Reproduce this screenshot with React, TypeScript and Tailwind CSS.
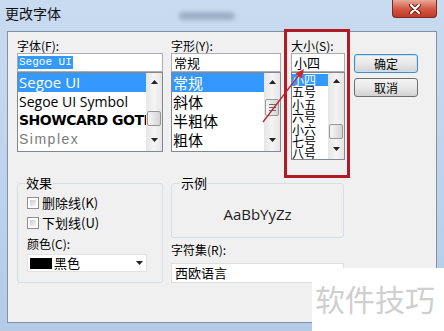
const ui = "font-['Noto_Sans_CJK_SC','Liberation_Sans',sans-serif]";

function Tri({ up = false }: { up?: boolean }) {
  return (
    <svg width="7" height="4" viewBox="0 0 7 4">
      {up ? <path d="M0 4 L3.5 0 L7 4 Z" fill="#222" /> : <path d="M0 0 L7 0 L3.5 4 Z" fill="#222" />}
    </svg>
  );
}

function ScrollBar({ thumb, grip = false }: { thumb: string; grip?: boolean }) {
  return (
    <div className="flex w-[16px] shrink-0 flex-col bg-gradient-to-r from-[#e6e6e6] via-[#f4f4f4] to-[#e6e6e6]">
      <div className="flex h-[18px] items-center justify-center">
        <Tri up />
      </div>
      <div className="flex-1 px-[1px]">
        <div
          className={`${thumb} flex flex-col items-center justify-center gap-[2px] rounded-[2px] border border-[#979797] bg-gradient-to-r from-[#f6f6f6] to-[#d4d4d4]`}
        >
          {grip && (
            <>
              <span className="h-[1px] w-[7px] bg-[#6b6b6b]" />
              <span className="h-[1px] w-[7px] bg-[#6b6b6b]" />
              <span className="h-[1px] w-[7px] bg-[#6b6b6b]" />
            </>
          )}
        </div>
      </div>
      <div className="flex h-[22px] items-center justify-center">
        <Tri />
      </div>
    </div>
  );
}

function Check({ label }: { label: string }) {
  return (
    <div className="mt-[6px] flex h-[14px] items-center gap-[3px]">
      <span className="h-[12px] w-[12px] border border-[#8f8f8f] bg-white p-[2px]">
        <span className="block h-full w-full bg-gradient-to-br from-[#c9cdd3] to-[#f4f4f4]" />
      </span>
      <span className="text-[13px] leading-[14px]">{label}</span>
    </div>
  );
}

export default function App() {
  return (
    <div
      className={`relative h-[331px] w-[444px] overflow-hidden bg-gradient-to-b from-[#c8dbf0] via-[#bfd4ec] to-[#b4cbe6] ${ui} text-[12px] text-black`}
    >
      {/* title bar */}
      <div className="flex h-[31px] items-start">
        <div className="pl-[5px] pt-[5px] text-[14px] leading-[16px] text-[#111]">更改字体</div>
        <div className="ml-[118px] mt-[12px] h-[8px] w-[56px] rounded-full bg-[#8192aa] opacity-60 blur-[2px]" />
        <div className="ml-auto mr-[7px] flex h-[18px] w-[45px] items-center justify-center rounded-b-[4px] border border-t-0 border-[#7a2a20] bg-gradient-to-b from-[#e8a898] via-[#d45a45] to-[#c03826]">
          <svg width="12" height="10" viewBox="0 0 12 10">
            <path d="M2 1 L10 9 M10 1 L2 9" stroke="#5a1810" strokeWidth="4" strokeLinecap="round" />
            <path d="M2 1 L10 9 M10 1 L2 9" stroke="#fff" strokeWidth="2.2" strokeLinecap="round" />
          </svg>
        </div>
      </div>

      {/* client area */}
      <div className="mx-[7px] h-[292px] border border-[#7f92aa] bg-[#f0f0f0] pl-[9px] pt-[6px]">
        <div className="flex items-start">
          {/* font family */}
          <div className="w-[146px]">
            <div className="h-[15px] leading-[15px]">字体(F):</div>
            <div className="flex h-[19px] items-center border border-[#abadb3] bg-white">
              <span className="bg-[#3399ff] px-[1px] font-['Liberation_Mono',monospace] text-[11px] leading-[13px] text-white">
                Segoe UI
              </span>
            </div>
            <div className="flex h-[80px] border border-[#828790] bg-white">
              <div className="flex-1 overflow-hidden whitespace-nowrap">
                <div className="h-[19px] bg-[#3399ff] pl-[1px] font-['Open_Sans',sans-serif] text-[15px] leading-[19px] text-white">
                  Segoe UI
                </div>
                <div className="h-[19px] pl-[1px] font-['Open_Sans',sans-serif] text-[14px] leading-[19px]">
                  Segoe UI Symbol
                </div>
                <div className="h-[19px] pl-[1px] font-['DejaVu_Sans',sans-serif] text-[14px] font-black leading-[19px] tracking-[-0.5px]">
                  SHOWCARD GOTHIC
                </div>
                <div className="h-[19px] pl-[1px] font-['Liberation_Sans',sans-serif] text-[14px] font-light leading-[19px] tracking-[1.5px] text-[#7a7a7a]">
                  Simplex
                </div>
              </div>
              <ScrollBar thumb="mt-[20px] h-[15px]" />
            </div>
          </div>

          {/* style */}
          <div className="ml-[8px] w-[110px]">
            <div className="h-[15px] leading-[15px]">字形(Y):</div>
            <div className="flex h-[19px] items-center border border-[#abadb3] bg-white pl-[2px] text-[13px]">常规</div>
            <div className="flex h-[80px] border border-[#828790] bg-white">
              <div className="flex-1 overflow-hidden text-[15px] leading-[19px]">
                <div className="h-[19px] bg-[#3399ff] pl-[1px] text-white">常规</div>
                <div className="h-[19px] pl-[1px]">斜体</div>
                <div className="h-[19px] pl-[1px]">半粗体</div>
                <div className="h-[19px] pl-[1px]">粗体</div>
              </div>
              <ScrollBar thumb="mt-[8px] h-[17px]" grip />
            </div>
          </div>

          {/* size */}
          <div className="ml-[10px] w-[54px]">
            <div className="h-[15px] leading-[15px]">大小(S):</div>
            <div className="flex h-[19px] items-center border border-[#abadb3] bg-white pl-[2px] text-[13px]">小四</div>
            <div className="flex h-[88px] border border-[#828790] bg-white">
              <div className="flex-1 overflow-hidden pt-[1px] text-[12px] leading-[12.4px]">
                <div className="h-[12.4px] bg-[#3399ff] text-white">小四</div>
                <div className="h-[12.4px]">五号</div>
                <div className="h-[12.4px]">小五</div>
                <div className="h-[12.4px]">六号</div>
                <div className="h-[12.4px]">小六</div>
                <div className="h-[12.4px]">七号</div>
                <div className="h-[12.4px]">八号</div>
              </div>
              <ScrollBar thumb="mt-[35px] h-[15px]" />
            </div>
          </div>

          {/* buttons */}
          <div className="ml-[9px] flex w-[64px] flex-col gap-[5px] pt-[16px]">
            <div className="flex h-[19px] items-center justify-center rounded-[3px] border border-[#4a8cc0] bg-gradient-to-b from-[#f4f4f4] via-[#e8e8e8] to-[#d2d2d2] shadow-[inset_0_0_0_1px_#bfe2f8] text-[12px]">
              确定
            </div>
            <div className="flex h-[19px] items-center justify-center rounded-[3px] border border-[#707070] bg-gradient-to-b from-[#f4f4f4] via-[#e8e8e8] to-[#d2d2d2] text-[12px]">
              取消
            </div>
          </div>
        </div>

        <div className="mt-[23px] flex items-start gap-[8px]">
          {/* effects */}
          <div className="h-[100px] w-[146px] rounded-[3px] border border-[#d5dfe5] pl-[9px]">
            <div className="-mt-[8px] ml-[-2px] w-fit bg-[#f0f0f0] px-[1px] text-[13px] leading-[14px]">效果</div>
            <Check label="删除线(K)" />
            <Check label="下划线(U)" />
            <div className="mt-[7px] h-[14px] text-[12px] leading-[14px]">颜色(C):</div>
            <div className="mt-[3px] flex h-[18px] w-[120px] items-center border border-[#e2e2e2] bg-white pl-[2px]">
              <span className="h-[11px] w-[22px] bg-black" />
              <span className="ml-[2px] text-[13px] leading-[14px]">黑色</span>
              <span className="ml-auto mr-[3px] flex">
                <Tri />
              </span>
            </div>
          </div>

          {/* sample + charset */}
          <div className="w-[173px]">
            <div className="h-[55px] rounded-[3px] border border-[#d5dfe5]">
              <div className="-mt-[8px] ml-[8px] w-fit bg-[#f0f0f0] px-[1px] text-[13px] leading-[14px]">示例</div>
              <div className="mt-[14px] h-[20px] text-center font-['Open_Sans',sans-serif] text-[15px] leading-[20px] text-[#1e1e1e]">
                AaBbYyZz
              </div>
            </div>
            <div className="mt-[5px] h-[14px] text-[12px] leading-[14px]">字符集(R):</div>
            <div className="mt-[6px] flex h-[20px] items-center border border-[#dedede] bg-white pl-[3px] text-[13px]">
              西欧语言
            </div>
          </div>
        </div>
      </div>

      {/* annotation: red box + arrow */}
      <div className="absolute left-[284px] top-[29px] h-[149px] w-[66px] border-[3px] border-[#b01b24]" />
      <svg className="pointer-events-none absolute left-0 top-0" width="444" height="331" viewBox="0 0 444 331">
        <path d="M263 122 L299 75" stroke="#c0282d" strokeWidth="1.3" />
        <path d="M304 69 L301.7 78.6 L295.3 73.7 Z" fill="#d0262b" />
      </svg>

      {/* watermark */}
      <div className="absolute left-[312px] top-[268px] h-[63px] w-[132px] bg-white pl-[3px] pt-[15px] text-[30px] leading-[30px] text-[#cfcfcf]">
        软件技巧
      </div>
    </div>
  );
}
